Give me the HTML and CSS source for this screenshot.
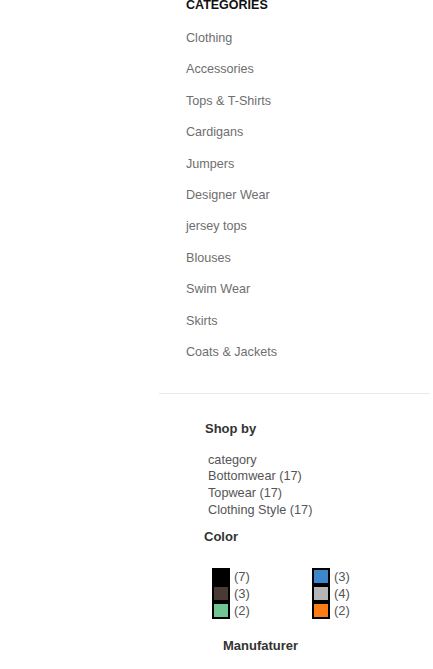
FILE: index.html
```html
<!DOCTYPE html>
<html>
<head>
<meta charset="utf-8">
<link rel="stylesheet" href="styles.css">
</head>
<body>
<div class="sidebar">
  <section class="categories">
    <h2 class="cat-title">CATEGORIES</h2>
    <ul class="cat-list">
      <li>Clothing</li>
      <li>Accessories</li>
      <li>Tops &amp; T-Shirts</li>
      <li>Cardigans</li>
      <li>Jumpers</li>
      <li>Designer Wear</li>
      <li>jersey tops</li>
      <li>Blouses</li>
      <li>Swim Wear</li>
      <li>Skirts</li>
      <li>Coats &amp; Jackets</li>
    </ul>
  </section>
  <div class="divider"></div>
  <section class="shopby">
    <h3 class="shop-title">Shop by</h3>
    <ul class="shop-list">
      <li>category</li>
      <li>Bottomwear (17)</li>
      <li>Topwear (17)</li>
      <li>Clothing Style (17)</li>
    </ul>
    <h3 class="color-title">Color</h3>
    <div class="swatches">
      <ul class="swatch-col">
        <li class="swatch-row"><span class="swatch sw-black"></span><span class="count">(7)</span></li>
        <li class="swatch-row"><span class="swatch sw-brown"></span><span class="count">(3)</span></li>
        <li class="swatch-row"><span class="swatch sw-green"></span><span class="count">(2)</span></li>
      </ul>
      <ul class="swatch-col">
        <li class="swatch-row"><span class="swatch sw-blue"></span><span class="count">(3)</span></li>
        <li class="swatch-row"><span class="swatch sw-grey"></span><span class="count">(4)</span></li>
        <li class="swatch-row"><span class="swatch sw-orange"></span><span class="count">(2)</span></li>
      </ul>
    </div>
    <h3 class="manu-title">Manufaturer</h3>
  </section>
</div>
</body>
</html>
```
FILE: styles.css
```css
html, body {
  margin: 0;
  padding: 0;
  background: #fff;
}
body {
  font-family: "Liberation Sans", Arial, sans-serif;
  overflow: hidden;
}
ul {
  list-style: none;
  margin: 0;
  padding: 0;
}
h2, h3 {
  margin: 0;
}
.sidebar {
  margin-left: 159px;
  width: 271px;
  display: flex;
  flex-direction: column;
}
.categories {
  padding-left: 27px;
  display: flex;
  flex-direction: column;
}
.cat-title {
  margin-top: -2.3px;
  font-size: 12.5px;
  line-height: 14px;
  font-weight: bold;
  color: #111;
}
.cat-list {
  margin-top: 11px;
}
.cat-list li {
  font-size: 12.6px;
  line-height: 31.45px;
  color: #6e6e6e;
}
.divider {
  margin-top: 24.5px;
  height: 1px;
  background: #e8e8e8;
}
.shopby {
  display: flex;
  flex-direction: column;
  padding-left: 46px;
}
.shop-title, .color-title, .manu-title {
  font-size: 13px;
  line-height: 16px;
  font-weight: bold;
  color: #333;
}
.shop-title {
  margin-top: 27px;
}
.shop-list {
  margin-top: 14.6px;
  padding-left: 3px;
}
.shop-list li {
  font-size: 12.7px;
  line-height: 16.7px;
  color: #555;
}
.color-title {
  margin-top: 10px;
  margin-left: -1px;
}
.swatches {
  margin-top: 23.5px;
  padding-left: 7px;
  display: flex;
}
.swatch-col {
  width: 100px;
  display: flex;
  flex-direction: column;
}
.swatch-row {
  display: flex;
  align-items: center;
  height: 17px;
}
.swatch {
  box-sizing: border-box;
  width: 18px;
  height: 17px;
  border: 2px solid #000;
}
.count {
  margin-left: 4px;
  font-size: 13px;
  line-height: 17px;
  color: #555;
}
.sw-black { background: #000; }
.sw-brown { background: #4a3a34; }
.sw-green { background: #72c592; }
.sw-blue { background: #3d86cc; }
.sw-grey { background: #b5b5b5; }
.sw-orange { background: #fa7d17; }
.manu-title {
  margin-top: 19px;
  margin-left: 18px;
}
```
